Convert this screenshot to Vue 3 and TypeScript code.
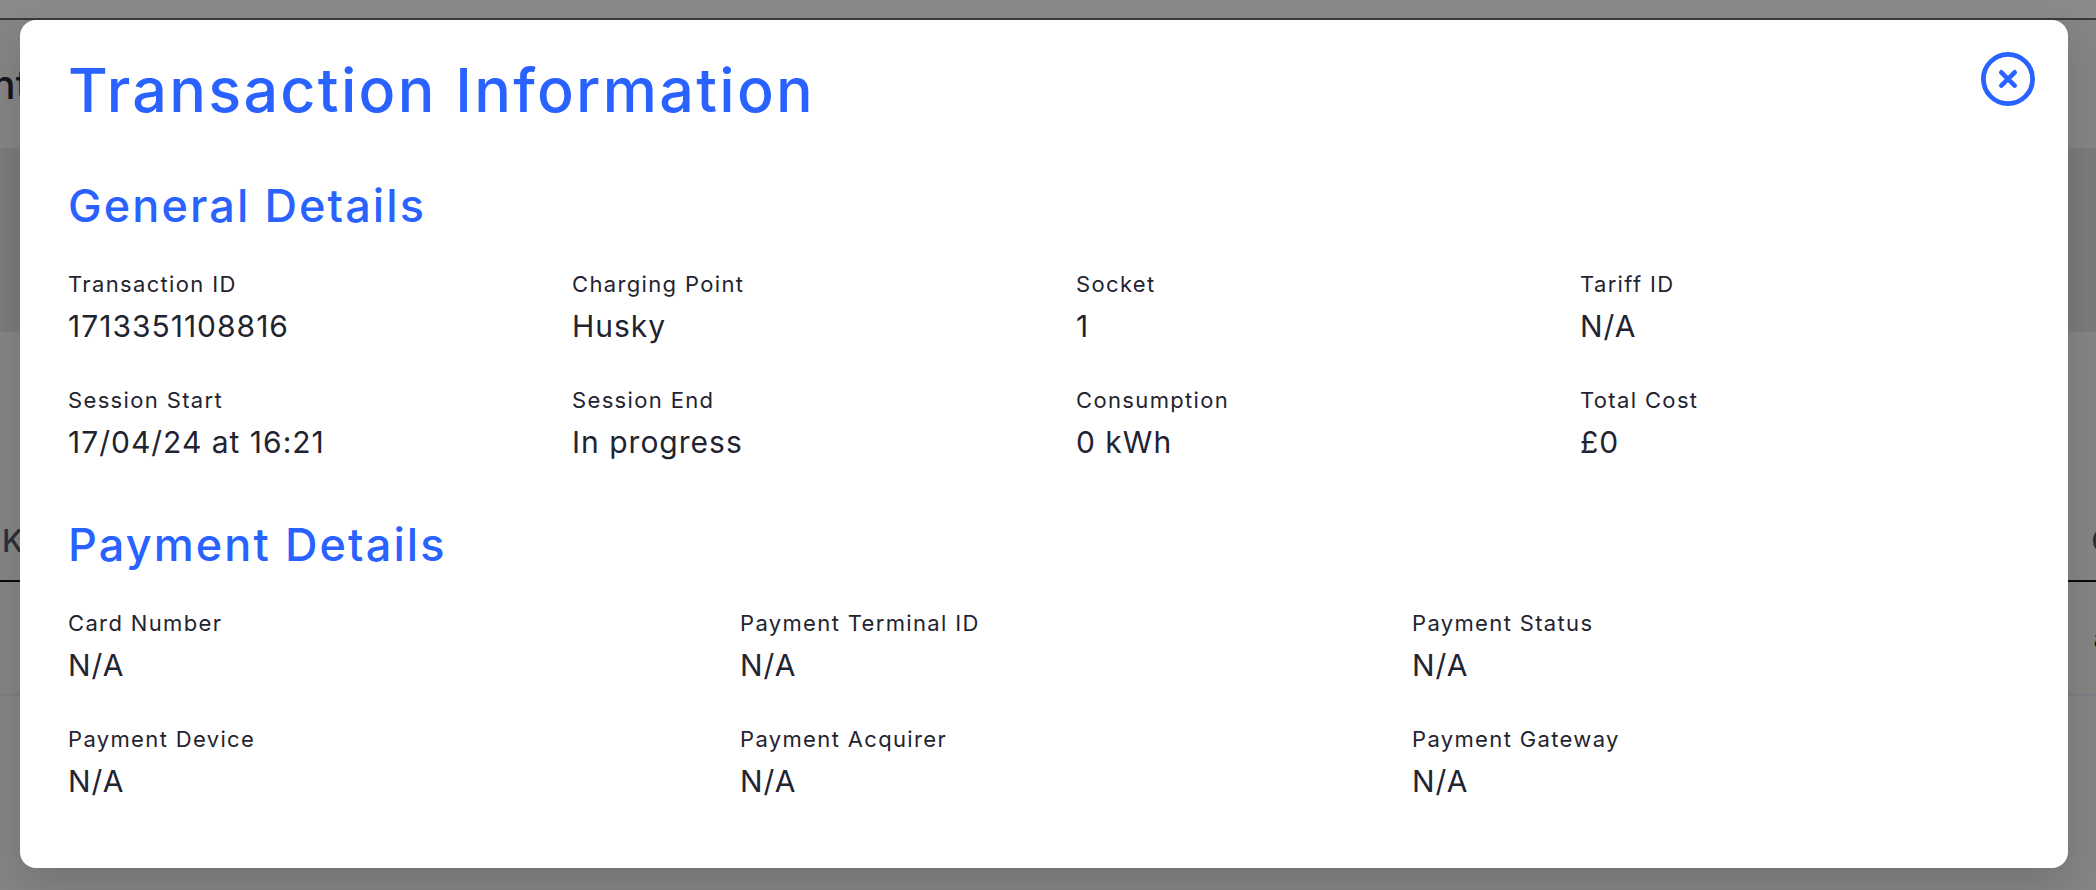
<template>
  <div class="page">
    <!-- page behind the modal -->
    <div class="backdrop-page">
      <div class="top-line"></div>
      <div class="page-head"><span class="page-title">Payment</span></div>
      <div class="band"></div>
      <div class="table-head"><span>K</span><span>C</span></div>
      <div class="table-row"><span>a</span></div>
    </div>
    <div class="overlay">
      <div class="modal">
        <button class="close-btn" aria-label="Close">
          <svg width="54" height="54" viewBox="0 0 54 54" fill="none" stroke="#2962ff" stroke-linecap="round">
            <circle cx="27" cy="27" r="24.6" stroke-width="4.8" />
            <path d="M20.3 20.3L33.7 33.7M33.7 20.3L20.3 33.7" stroke-width="4.6" />
          </svg>
        </button>
        <h1 class="title">Transaction Information</h1>
        <section v-for="section in sections" :key="section.title" class="section">
          <h2 class="section-title">{{ section.title }}</h2>
          <div class="fields" :class="section.columns === 4 ? 'four' : 'three'">
            <div v-for="field in section.fields" :key="field.label" class="field">
              <div class="field-label">{{ field.label }}</div>
              <div class="field-value">{{ field.value }}</div>
            </div>
          </div>
        </section>
      </div>
    </div>
  </div>
</template>

<script setup lang="ts">
const sections = [
  {
    title: 'General Details',
    columns: 4,
    fields: [
      { label: 'Transaction ID', value: '1713351108816' },
      { label: 'Charging Point', value: 'Husky' },
      { label: 'Socket', value: '1' },
      { label: 'Tariff ID', value: 'N/A' },
      { label: 'Session Start', value: '17/04/24 at 16:21' },
      { label: 'Session End', value: 'In progress' },
      { label: 'Consumption', value: '0 kWh' },
      { label: 'Total Cost', value: '£0' },
    ],
  },
  {
    title: 'Payment Details',
    columns: 3,
    fields: [
      { label: 'Card Number', value: 'N/A' },
      { label: 'Payment Terminal ID', value: 'N/A' },
      { label: 'Payment Status', value: 'N/A' },
      { label: 'Payment Device', value: 'N/A' },
      { label: 'Payment Acquirer', value: 'N/A' },
      { label: 'Payment Gateway', value: 'N/A' },
    ],
  },
]
</script>

<style>
html, body {
  margin: 0;
  overflow: hidden;
}
</style>

<style scoped>
.page {
  position: relative;
  width: 2096px;
  height: 890px;
  overflow: hidden;
  background: #858585;
  font-family: Inter, "Open Sans", sans-serif;
}

.top-line {
  height: 18px;
  background: #8a8a8a;
  border-bottom: 2px solid #3a3a3a;
}

.page-head {
  height: 128px;
  background: #858585;
  display: flex;
  align-items: center;
  overflow: hidden;
}

.page-title {
  margin-left: -138px;
  font-size: 40px;
  font-weight: 500;
  color: #14151c;
}

.band {
  height: 184px;
  background: #7b7b7b;
}

.table-head {
  height: 250px;
  box-sizing: border-box;
  border-bottom: 2px solid #0a0a0a;
  padding: 190px 0 0 2px;
  display: flex;
  justify-content: space-between;
  font-size: 31px;
  font-weight: 500;
  color: #2c3038;
  background: #858585;
  margin-right: -18px;
}

.table-row {
  height: 114px;
  box-sizing: border-box;
  border-bottom: 2px solid #7a7f85;
  display: flex;
  justify-content: flex-end;
  align-items: center;
  font-size: 26px;
  color: #14151c;
  margin-right: -12px;
}

.overlay {
  position: absolute;
  inset: 0;
  padding: 20px 28px 22px 20px;
  box-sizing: border-box;
}

.modal {
  position: relative;
  height: 100%;
  box-sizing: border-box;
  padding: 46px 48px 0;
  background: #fff;
  border-radius: 16px;
  box-shadow: 0 16px 40px rgba(0, 0, 0, 0.14);
}

.close-btn {
  position: absolute;
  top: 32px;
  right: 33px;
  padding: 0;
  border: none;
  background: none;
  display: block;
}

.close-btn svg {
  display: block;
}

.title {
  margin: 0 0 65px;
  font-size: 61px;
  line-height: 48px;
  font-weight: 530;
  letter-spacing: 2.3px;
  color: #2962ff;
}

.section {
  margin-bottom: 58px;
}

.section-title {
  margin: 0 0 36px;
  font-size: 45px;
  line-height: 54px;
  font-weight: 530;
  letter-spacing: 2.1px;
  color: #2962ff;
}

.fields {
  display: grid;
  column-gap: 64px;
  row-gap: 41px;
}

.fields.four {
  grid-template-columns: repeat(4, 1fr);
}

.fields.three {
  grid-template-columns: repeat(3, 1fr);
}

.field-label {
  font-size: 22px;
  line-height: 30px;
  letter-spacing: 1.35px;
  color: #1f2430;
}

.field-value {
  margin-top: 9px;
  font-size: 30px;
  line-height: 36px;
  letter-spacing: 1px;
  color: #1f2430;
}
</style>
